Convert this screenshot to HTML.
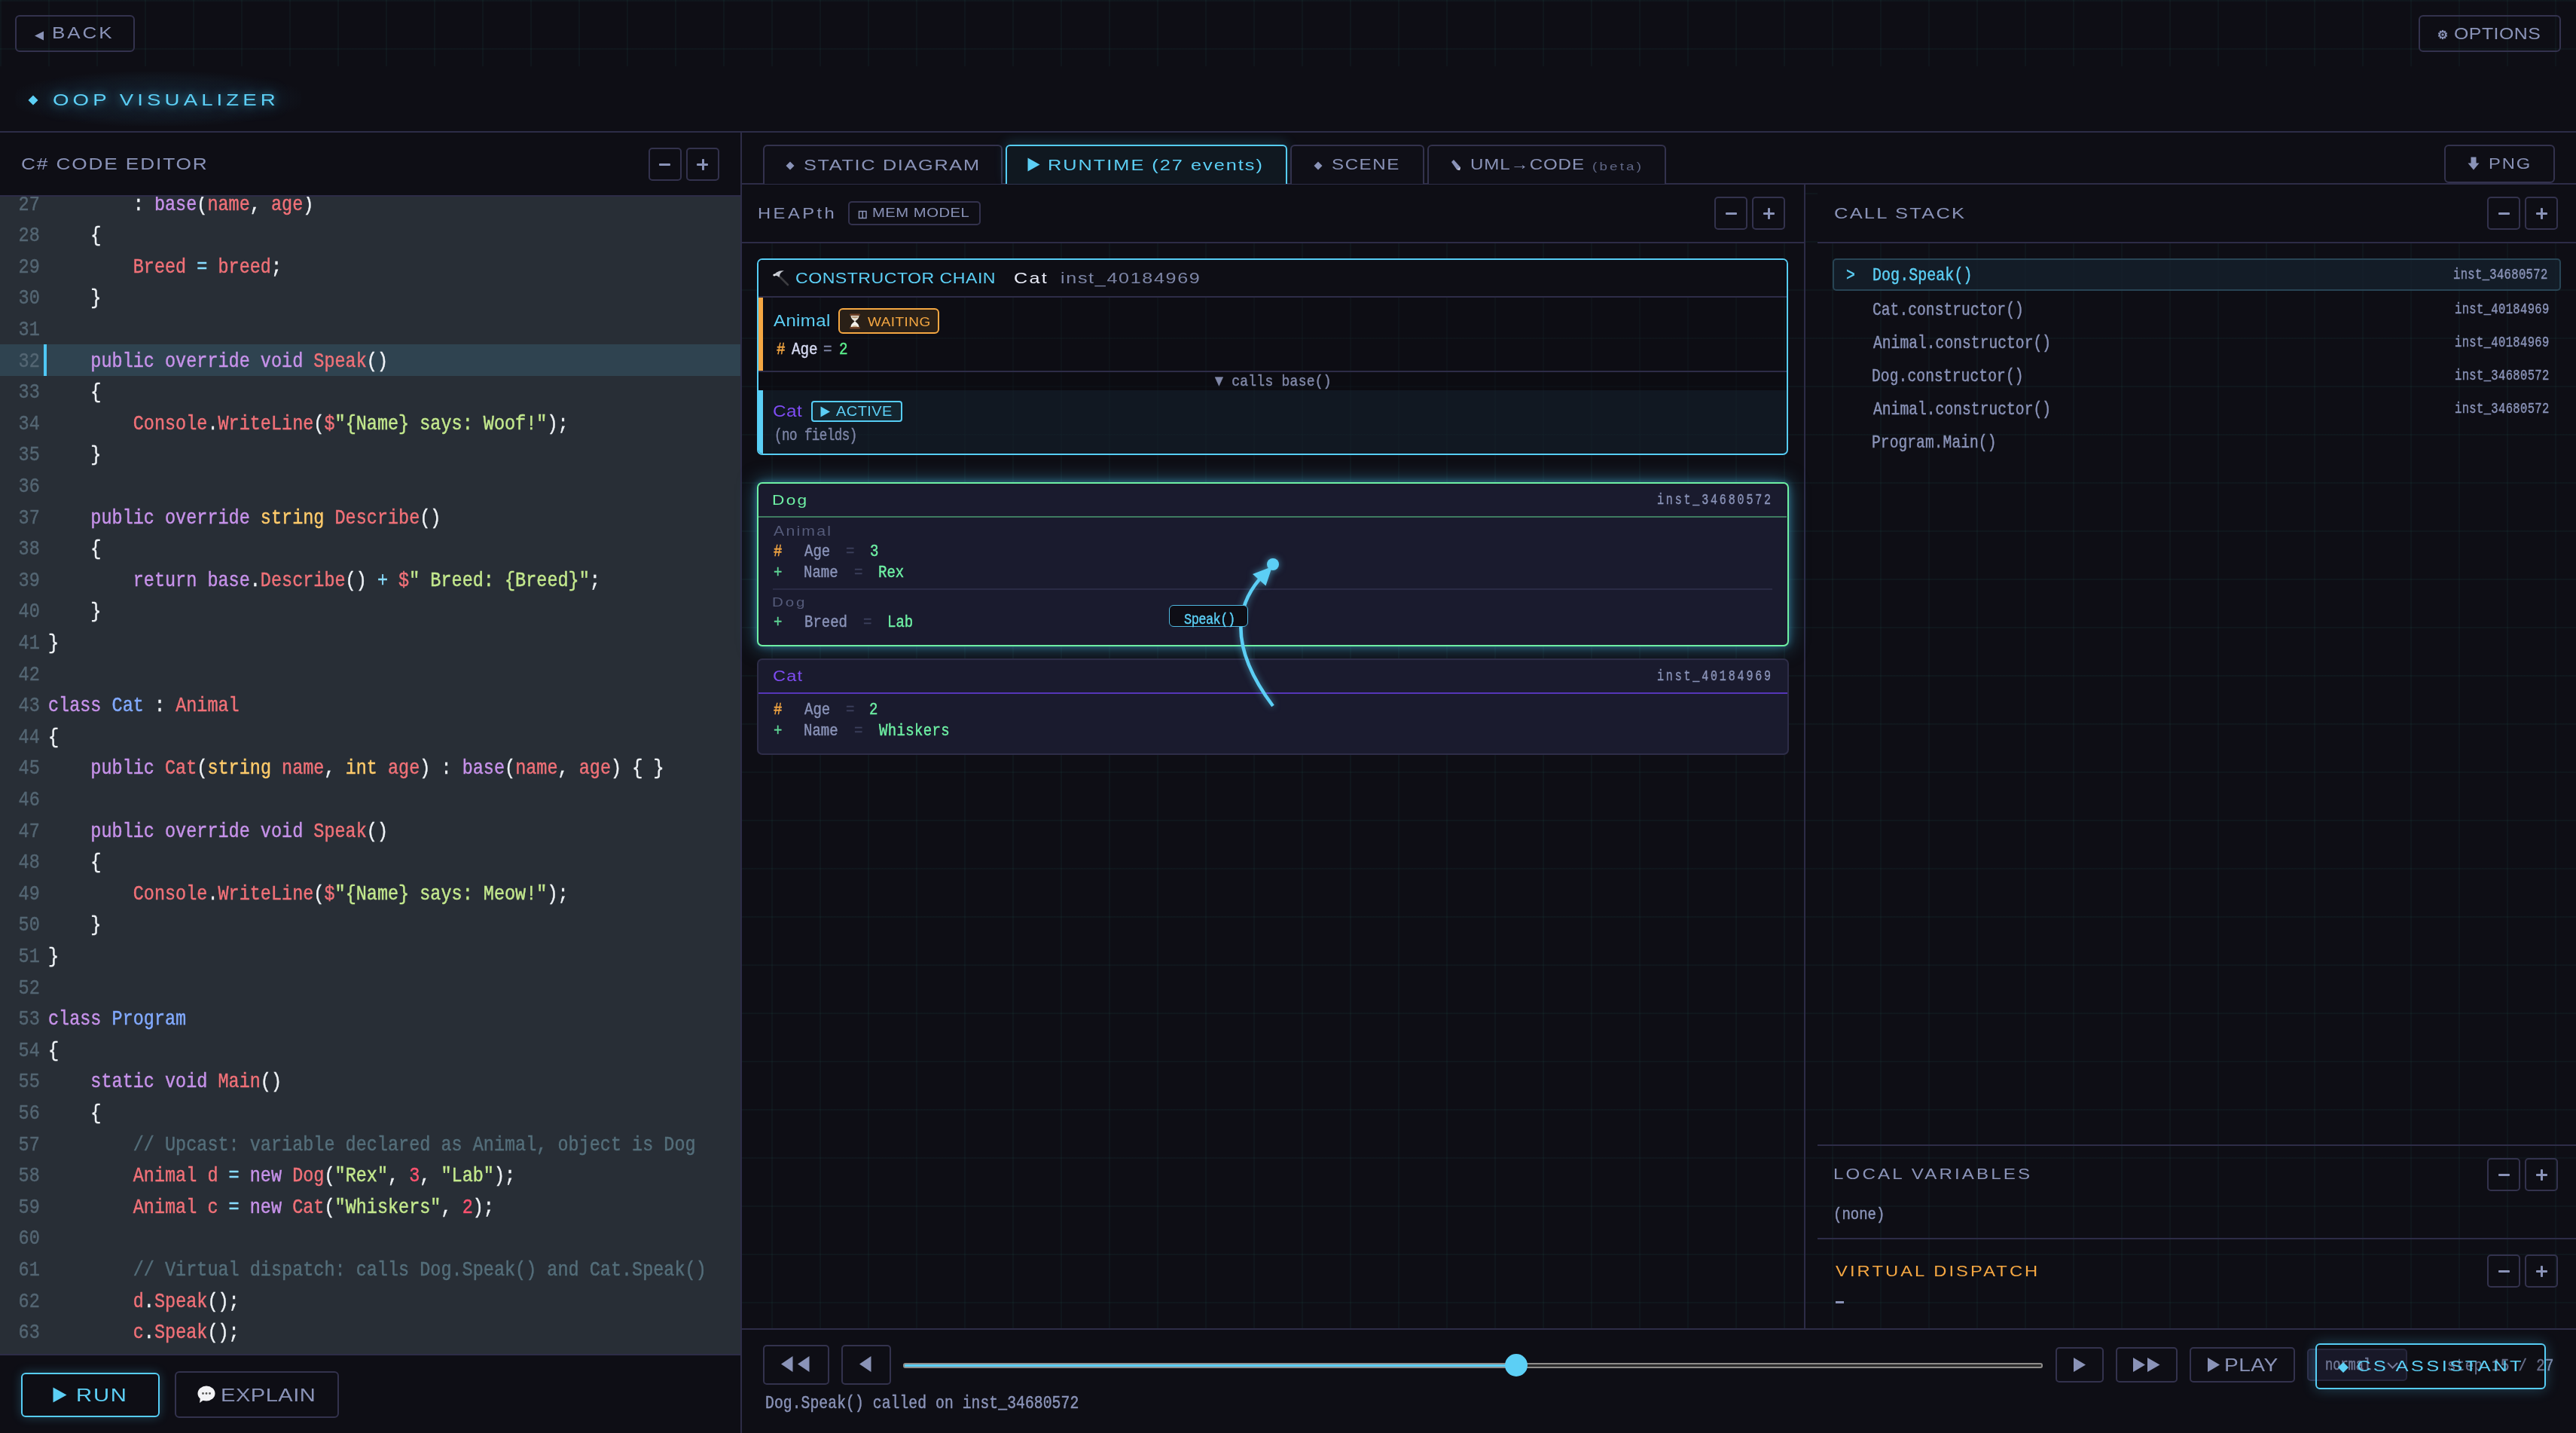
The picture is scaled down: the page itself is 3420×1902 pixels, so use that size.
<!DOCTYPE html>
<html><head><meta charset="utf-8">
<style>
html,body{margin:0;padding:0;}
body{width:3420px;height:1902px;position:relative;overflow:hidden;background-color:#0e0e15;
 background-image:linear-gradient(to right, rgba(50,165,150,.055) 2px, transparent 2px),linear-gradient(to bottom, rgba(50,165,150,.055) 2px, transparent 2px);
 background-size:64px 64px;font-family:"Liberation Sans",sans-serif;}
div{box-sizing:border-box;}
@media (max-width:1800px){html{zoom:0.5;}}
.a{position:absolute;}
.fs{position:absolute;font-family:"Liberation Sans",sans-serif;white-space:pre;}
.fm{position:absolute;font-family:"Liberation Mono",monospace;white-space:pre;-webkit-text-stroke:0.45px currentColor;}
.solid{position:absolute;background:#0e0e15;}
.hl{position:absolute;background:#2d2c47;}
.btn{position:absolute;border:2px solid #33324d;border-radius:6px;}
.cl{position:absolute;left:0;width:983px;height:41.6px;font-family:"Liberation Mono",monospace;font-size:27.3px;line-height:41.6px;white-space:pre;-webkit-text-stroke:0.45px currentColor;}
.ln{position:absolute;right:930px;color:#546673;transform:scaleX(0.8603);transform-origin:100% 0;}
.cx{position:absolute;left:64px;transform:scaleX(0.8603);transform-origin:0 0;}
.kW{color:#eef2f6}.kP{color:#c792ea}.kR{color:#f07178}.kY{color:#ffcb6b}.kB{color:#82aaff}.kC{color:#89ddff}.kS{color:#c3e88d}.kN{color:#ff5370}.kM{color:#546e7a}
.mm{position:absolute;width:15px;height:3px;background:#8a93b8;border-radius:1px;}
</style></head><body>

<!-- title header -->
<div class="solid" style="left:0;top:88px;width:3420px;height:88px;"></div>
<div class="hl" style="left:0;top:174px;width:3420px;height:2px;"></div>
<div class="a" style="left:20px;top:95px;width:380px;height:72px;border-radius:36px;background:radial-gradient(ellipse at center, rgba(70,170,220,.13) 0%, rgba(70,170,220,.05) 55%, transparent 75%);"></div>

<!-- top buttons -->
<div class="btn" style="left:20px;top:20px;width:159px;height:49px;"></div>
<svg class="a" style="left:45px;top:41px" width="14" height="13"><polygon points="1,6.5 13,0.5 13,12.5" fill="#8a93b8"/></svg>
<div class="btn" style="left:3211px;top:20px;width:189px;height:49px;"></div>
<svg class="a" style="left:3235px;top:38px" width="16" height="16" viewBox="0 0 16 16"><g fill="#8a93b8"><circle cx="8" cy="8" r="4.7"/><rect x="6.9" y="1.9" width="2.2" height="3" transform="rotate(0 8 8)"/><rect x="6.9" y="1.9" width="2.2" height="3" transform="rotate(36 8 8)"/><rect x="6.9" y="1.9" width="2.2" height="3" transform="rotate(72 8 8)"/><rect x="6.9" y="1.9" width="2.2" height="3" transform="rotate(108 8 8)"/><rect x="6.9" y="1.9" width="2.2" height="3" transform="rotate(144 8 8)"/><rect x="6.9" y="1.9" width="2.2" height="3" transform="rotate(180 8 8)"/><rect x="6.9" y="1.9" width="2.2" height="3" transform="rotate(216 8 8)"/><rect x="6.9" y="1.9" width="2.2" height="3" transform="rotate(252 8 8)"/><rect x="6.9" y="1.9" width="2.2" height="3" transform="rotate(288 8 8)"/><rect x="6.9" y="1.9" width="2.2" height="3" transform="rotate(324 8 8)"/></g><circle cx="8" cy="8" r="3" fill="#0e0e15"/><circle cx="8" cy="8" r="1.7" fill="#8a93b8"/></svg>
<svg class="a" style="left:37px;top:126px" width="14" height="14"><polygon points="7,0.5 13.5,7 7,13.5 0.5,7" fill="#5ccff5"/></svg>

<!-- left editor -->
<div class="solid" style="left:0;top:176px;width:983px;height:85px;"></div>
<div class="hl" style="left:0;top:259px;width:983px;height:2px;"></div>
<div class="btn" style="left:861px;top:196px;width:44px;height:44px;border-radius:5px;"></div>
<div class="btn" style="left:911px;top:196px;width:44px;height:44px;border-radius:5px;"></div>
<div class="mm" style="left:875px;top:216.5px;"></div>
<div class="mm" style="left:925px;top:216.5px;"></div>
<div class="mm" style="left:931.5px;top:210.5px;width:3px;height:15px;"></div>
<div class="a" style="left:0;top:261px;width:983px;height:1536px;background:#282e36;overflow:hidden;">
 <div class="a" style="left:0;top:196.2px;width:983px;height:41.6px;background:#2f4350;"></div>
 <div class="a" style="left:58px;top:196.2px;width:4px;height:41.6px;background:#4fc8f5;"></div>
<div class="cl" style="top:-10.5px"><span class="ln">27</span><span class="cx"><span class="kW">        : </span><span class="kP">base</span><span class="kW">(</span><span class="kR">name</span><span class="kW">, </span><span class="kR">age</span><span class="kW">)</span></span></div>
<div class="cl" style="top:31.1px"><span class="ln">28</span><span class="cx"><span class="kW">    {</span></span></div>
<div class="cl" style="top:72.7px"><span class="ln">29</span><span class="cx"><span class="kR">        Breed</span><span class="kC"> = </span><span class="kR">breed</span><span class="kW">;</span></span></div>
<div class="cl" style="top:114.3px"><span class="ln">30</span><span class="cx"><span class="kW">    }</span></span></div>
<div class="cl" style="top:155.9px"><span class="ln">31</span><span class="cx"></span></div>
<div class="cl" style="top:197.5px"><span class="ln">32</span><span class="cx"><span class="kP">    public override void </span><span class="kR">Speak</span><span class="kW">()</span></span></div>
<div class="cl" style="top:239.1px"><span class="ln">33</span><span class="cx"><span class="kW">    {</span></span></div>
<div class="cl" style="top:280.7px"><span class="ln">34</span><span class="cx"><span class="kR">        Console</span><span class="kW">.</span><span class="kR">WriteLine</span><span class="kW">(</span><span class="kR">$</span><span class="kS">&quot;{Name} says: Woof!&quot;</span><span class="kW">);</span></span></div>
<div class="cl" style="top:322.3px"><span class="ln">35</span><span class="cx"><span class="kW">    }</span></span></div>
<div class="cl" style="top:363.9px"><span class="ln">36</span><span class="cx"></span></div>
<div class="cl" style="top:405.5px"><span class="ln">37</span><span class="cx"><span class="kP">    public override </span><span class="kY">string </span><span class="kR">Describe</span><span class="kW">()</span></span></div>
<div class="cl" style="top:447.1px"><span class="ln">38</span><span class="cx"><span class="kW">    {</span></span></div>
<div class="cl" style="top:488.7px"><span class="ln">39</span><span class="cx"><span class="kP">        return base</span><span class="kW">.</span><span class="kR">Describe</span><span class="kW">() </span><span class="kC">+ </span><span class="kR">$</span><span class="kS">&quot; Breed: {Breed}&quot;</span><span class="kW">;</span></span></div>
<div class="cl" style="top:530.3px"><span class="ln">40</span><span class="cx"><span class="kW">    }</span></span></div>
<div class="cl" style="top:571.9px"><span class="ln">41</span><span class="cx"><span class="kW">}</span></span></div>
<div class="cl" style="top:613.5px"><span class="ln">42</span><span class="cx"></span></div>
<div class="cl" style="top:655.1px"><span class="ln">43</span><span class="cx"><span class="kP">class </span><span class="kB">Cat</span><span class="kW"> : </span><span class="kR">Animal</span></span></div>
<div class="cl" style="top:696.7px"><span class="ln">44</span><span class="cx"><span class="kW">{</span></span></div>
<div class="cl" style="top:738.3px"><span class="ln">45</span><span class="cx"><span class="kP">    public </span><span class="kR">Cat</span><span class="kW">(</span><span class="kY">string </span><span class="kR">name</span><span class="kW">, </span><span class="kY">int </span><span class="kR">age</span><span class="kW">) : </span><span class="kP">base</span><span class="kW">(</span><span class="kR">name</span><span class="kW">, </span><span class="kR">age</span><span class="kW">) { }</span></span></div>
<div class="cl" style="top:779.9px"><span class="ln">46</span><span class="cx"></span></div>
<div class="cl" style="top:821.5px"><span class="ln">47</span><span class="cx"><span class="kP">    public override void </span><span class="kR">Speak</span><span class="kW">()</span></span></div>
<div class="cl" style="top:863.1px"><span class="ln">48</span><span class="cx"><span class="kW">    {</span></span></div>
<div class="cl" style="top:904.7px"><span class="ln">49</span><span class="cx"><span class="kR">        Console</span><span class="kW">.</span><span class="kR">WriteLine</span><span class="kW">(</span><span class="kR">$</span><span class="kS">&quot;{Name} says: Meow!&quot;</span><span class="kW">);</span></span></div>
<div class="cl" style="top:946.3px"><span class="ln">50</span><span class="cx"><span class="kW">    }</span></span></div>
<div class="cl" style="top:987.9px"><span class="ln">51</span><span class="cx"><span class="kW">}</span></span></div>
<div class="cl" style="top:1029.5px"><span class="ln">52</span><span class="cx"></span></div>
<div class="cl" style="top:1071.1px"><span class="ln">53</span><span class="cx"><span class="kP">class </span><span class="kB">Program</span></span></div>
<div class="cl" style="top:1112.7px"><span class="ln">54</span><span class="cx"><span class="kW">{</span></span></div>
<div class="cl" style="top:1154.3px"><span class="ln">55</span><span class="cx"><span class="kP">    static void </span><span class="kR">Main</span><span class="kW">()</span></span></div>
<div class="cl" style="top:1195.9px"><span class="ln">56</span><span class="cx"><span class="kW">    {</span></span></div>
<div class="cl" style="top:1237.5px"><span class="ln">57</span><span class="cx"><span class="kM">        // Upcast: variable declared as Animal, object is Dog</span></span></div>
<div class="cl" style="top:1279.1px"><span class="ln">58</span><span class="cx"><span class="kR">        Animal d </span><span class="kC">= </span><span class="kP">new </span><span class="kR">Dog</span><span class="kW">(</span><span class="kS">&quot;Rex&quot;</span><span class="kW">, </span><span class="kN">3</span><span class="kW">, </span><span class="kS">&quot;Lab&quot;</span><span class="kW">);</span></span></div>
<div class="cl" style="top:1320.7px"><span class="ln">59</span><span class="cx"><span class="kR">        Animal c </span><span class="kC">= </span><span class="kP">new </span><span class="kR">Cat</span><span class="kW">(</span><span class="kS">&quot;Whiskers&quot;</span><span class="kW">, </span><span class="kN">2</span><span class="kW">);</span></span></div>
<div class="cl" style="top:1362.3px"><span class="ln">60</span><span class="cx"></span></div>
<div class="cl" style="top:1403.9px"><span class="ln">61</span><span class="cx"><span class="kM">        // Virtual dispatch: calls Dog.Speak() and Cat.Speak()</span></span></div>
<div class="cl" style="top:1445.5px"><span class="ln">62</span><span class="cx"><span class="kR">        d</span><span class="kW">.</span><span class="kR">Speak</span><span class="kW">();</span></span></div>
<div class="cl" style="top:1487.1px"><span class="ln">63</span><span class="cx"><span class="kR">        c</span><span class="kW">.</span><span class="kR">Speak</span><span class="kW">();</span></span></div>
<div class="cl" style="top:1528.7px"><span class="ln">64</span><span class="cx"><span class="kW">    }</span></span></div>
</div>
<div class="hl" style="left:0;top:1797px;width:983px;height:2px;"></div>
<div class="solid" style="left:0;top:1799px;width:983px;height:103px;"></div>
<div class="a" style="left:28px;top:1822px;width:184px;height:59px;border:2.5px solid #56cdf5;border-radius:6px;box-shadow:0 0 14px rgba(80,200,245,.28);"></div>
<svg class="a" style="left:70px;top:1841px" width="20" height="21"><polygon points="0.5,0.5 18.5,10.5 0.5,20.5" fill="#5ccff5"/></svg>
<div class="btn" style="left:232px;top:1820px;width:218px;height:62px;"></div>
<svg class="a" style="left:261px;top:1839px" width="26" height="24" viewBox="0 0 26 24"><ellipse cx="13" cy="10.5" rx="11.5" ry="10" fill="#f2f2f5"/><polygon points="5,16 4,23 11,18" fill="#f2f2f5"/><circle cx="8.5" cy="10.5" r="1.4" fill="#555"/><circle cx="13" cy="10.5" r="1.4" fill="#555"/><circle cx="17.5" cy="10.5" r="1.4" fill="#555"/></svg>
<div class="hl" style="left:983px;top:176px;width:2px;height:1726px;"></div>

<!-- tab bar -->
<div class="solid" style="left:985px;top:176px;width:2435px;height:69px;"></div>
<div class="hl" style="left:985px;top:243px;width:2435px;height:2px;"></div>
<div class="a" style="left:1013px;top:192px;width:318px;height:52px;border:2px solid #33324d;border-bottom:none;border-radius:6px 6px 0 0;background:#0f0f17;"></div>
<div class="a" style="left:1335px;top:192px;width:374px;height:52px;border:2px solid #56cdf5;border-bottom:none;border-radius:6px 6px 0 0;background:#101820;box-shadow:0 -4px 16px rgba(80,200,245,.18);"></div>
<div class="a" style="left:1713px;top:192px;width:178px;height:52px;border:2px solid #33324d;border-bottom:none;border-radius:6px 6px 0 0;background:#0f0f17;"></div>
<div class="a" style="left:1895px;top:192px;width:317px;height:52px;border:2px solid #33324d;border-bottom:none;border-radius:6px 6px 0 0;background:#0f0f17;"></div>
<svg class="a" style="left:1042px;top:213px" width="14" height="14"><polygon points="7,1.5 12.5,7 7,12.5 1.5,7" fill="#8a93b8"/></svg>
<svg class="a" style="left:1364px;top:209px" width="17" height="19"><polygon points="0.5,0.5 16.5,9.5 0.5,18.5" fill="#5ccff5"/></svg>
<svg class="a" style="left:1743px;top:213px" width="14" height="14"><polygon points="7,1.5 12.5,7 7,12.5 1.5,7" fill="#8a93b8"/></svg>
<svg class="a" style="left:1925px;top:211px" width="15" height="16" viewBox="0 0 15 16"><polygon points="2,4 5,1 14,11 13,15 9,14" fill="#8a93b8"/><polygon points="9,14 13,15 14,11" fill="#c8cbe0"/></svg>
<div class="btn" style="left:3245px;top:192px;width:147px;height:51px;"></div>
<svg class="a" style="left:3276px;top:208px" width="16" height="18"><rect x="4.5" y="0.5" width="7" height="9" fill="#8a93b8"/><polygon points="0.5,8.5 15.5,8.5 8,17.5" fill="#8a93b8"/></svg>

<!-- heap header -->
<div class="solid" style="left:985px;top:245px;width:1410px;height:76px;"></div>
<div class="hl" style="left:985px;top:321px;width:1410px;height:2px;"></div>
<div class="btn" style="left:1126px;top:267px;width:176px;height:32px;border-radius:5px;"></div>
<svg class="a" style="left:1139px;top:279px" width="13" height="12"><rect x="1.5" y="1.5" width="9.5" height="9" fill="none" stroke="#8a93b8" stroke-width="1.5"/><rect x="5.5" y="1.5" width="1.5" height="9" fill="#8a93b8"/></svg>
<div class="btn" style="left:2276px;top:261px;width:44px;height:44px;border-radius:5px;"></div>
<div class="btn" style="left:2326px;top:261px;width:44px;height:44px;border-radius:5px;"></div>
<div class="mm" style="left:2290.5px;top:281.5px;"></div>
<div class="mm" style="left:2340.5px;top:281.5px;"></div>
<div class="mm" style="left:2346.5px;top:275.5px;width:3px;height:15px;"></div>
<div class="hl" style="left:2395px;top:245px;width:2px;height:1519px;"></div>

<!-- call stack header -->
<div class="solid" style="left:2413px;top:245px;width:1007px;height:76px;"></div>
<div class="hl" style="left:2413px;top:321px;width:1007px;height:2px;"></div>
<div class="btn" style="left:3302px;top:261px;width:44px;height:44px;border-radius:5px;"></div>
<div class="btn" style="left:3352px;top:261px;width:44px;height:44px;border-radius:5px;"></div>
<div class="mm" style="left:3316.5px;top:281.5px;"></div>
<div class="mm" style="left:3366.5px;top:281.5px;"></div>
<div class="mm" style="left:3372.5px;top:275.5px;width:3px;height:15px;"></div>
<div class="a" style="left:2433px;top:343px;width:967px;height:43px;border:2px solid #284454;border-radius:5px;background:rgba(22,34,46,.75);"></div>

<!-- local vars / virtual dispatch -->
<div class="hl" style="left:2413px;top:1519px;width:1007px;height:2px;"></div>
<div class="btn" style="left:3302px;top:1537px;width:44px;height:44px;border-radius:5px;"></div>
<div class="btn" style="left:3352px;top:1537px;width:44px;height:44px;border-radius:5px;"></div>
<div class="mm" style="left:3316.5px;top:1557.5px;"></div>
<div class="mm" style="left:3366.5px;top:1557.5px;"></div>
<div class="mm" style="left:3372.5px;top:1551.5px;width:3px;height:15px;"></div>
<div class="hl" style="left:2413px;top:1643px;width:1007px;height:2px;"></div>
<div class="btn" style="left:3302px;top:1665px;width:44px;height:44px;border-radius:5px;"></div>
<div class="btn" style="left:3352px;top:1665px;width:44px;height:44px;border-radius:5px;"></div>
<div class="mm" style="left:3316.5px;top:1685.5px;"></div>
<div class="mm" style="left:3366.5px;top:1685.5px;"></div>
<div class="mm" style="left:3372.5px;top:1679.5px;width:3px;height:15px;"></div>
<div class="a" style="left:2437px;top:1727px;width:11px;height:3px;background:#8a93b8;"></div>

<!-- constructor chain box -->
<div class="a" style="left:1005px;top:343px;width:1369px;height:261px;border:2px solid #56cdf5;border-radius:7px;background:rgba(14,14,21,.3);overflow:hidden;">
 <div class="a" style="left:0;top:0;width:1365px;height:48px;background:#0e0e15;"></div>
 <div class="hl" style="left:0;top:48px;width:1365px;height:2px;"></div>
 <div class="a" style="left:0;top:50px;width:6px;height:97px;background:#f5a742;"></div>
 <div class="hl" style="left:0;top:147px;width:1365px;height:2px;"></div>
 <div class="a" style="left:0;top:149px;width:1365px;height:24px;background:rgba(10,10,16,.3);"></div>
 <div class="a" style="left:0;top:173px;width:1365px;height:92px;background:rgba(22,38,52,.45);"></div>
 <div class="a" style="left:0;top:173px;width:6px;height:92px;background:#5ccff5;"></div>
</div>
<svg class="a" style="left:1025px;top:358px" width="24" height="22" viewBox="0 0 24 22"><line x1="9" y1="8" x2="21" y2="20" stroke="#3c3c40" stroke-width="2.6" stroke-linecap="round"/><path d="M1.5,7.5 L6,3.5 Q11,0.5 16,1.5 Q12,2.5 10.5,6 L9.5,10 L6.5,8 Z" fill="#c4c7cf"/><circle cx="3" cy="7" r="1.6" fill="#e8e9ee"/></svg>
<div class="a" style="left:1113px;top:409px;width:134px;height:34px;border:2px solid #f5a742;border-radius:6px;background:#2a2017;"></div>
<svg class="a" style="left:1127px;top:416px" width="16" height="21" viewBox="0 0 16 21"><path d="M2.5,3 C2.5,7.5 6.8,9 7.4,10.5 L8.6,10.5 C9.2,9 13.5,7.5 13.5,3 Z" fill="#e9e4da"/><path d="M3.5,4 L12.5,4 C12.3,5.5 11,6 8,6.5 C5,6 3.7,5.5 3.5,4 Z" fill="#b89a78"/><path d="M7.4,10.5 C6.8,12 2.5,13.5 2.5,18 L13.5,18 C13.5,13.5 9.2,12 8.6,10.5 Z" fill="#f3f0ea"/><path d="M4,18 C5,15.5 11,15.5 12,18 Z" fill="#c9ad86"/><rect x="1" y="0.5" width="14" height="2.6" rx="1" fill="#6e4026"/><rect x="1" y="17.9" width="14" height="2.6" rx="1" fill="#6e4026"/></svg>
<div class="a" style="left:1077px;top:532px;width:121px;height:28px;border:2px solid #56cdf5;border-radius:4px;background:#14252f;"></div>
<svg class="a" style="left:1089px;top:539px" width="14" height="15"><polygon points="0.5,0.5 13,7.5 0.5,14.5" fill="#5ccff5"/></svg>

<!-- dog box -->
<div class="a" style="left:1005px;top:640px;width:1370px;height:218px;border:2.5px solid #6ef0a4;border-radius:7px;background:#1a1b2e;box-shadow:0 0 26px rgba(70,175,215,.55),0 0 10px rgba(70,175,215,.45);">
 <div class="a" style="left:0;top:42.5px;width:1365px;height:2px;background:#3f7b60;"></div>
 <div class="a" style="left:19px;top:138.5px;width:1327px;height:2px;background:#2a2b45;"></div>
</div>
<!-- cat box -->
<div class="a" style="left:1005px;top:874px;width:1370px;height:128px;border:2px solid #2e2d48;border-radius:7px;background:#1a1b2e;">
 <div class="a" style="left:0;top:43px;width:1366px;height:2px;background:#5536b8;"></div>
</div>

<!-- arrow -->
<svg class="a" style="left:0;top:0;filter:drop-shadow(0 0 5px rgba(92,207,245,.6))" width="3420" height="1902">
 <path d="M1690,937 Q1615,836.5 1672,769" fill="none" stroke="#5ccff5" stroke-width="4.5"/>
 <polygon points="1663,762 1680.5,777.5 1689,752" fill="#5ccff5"/>
 <circle cx="1690" cy="749" r="8" fill="#5ccff5"/>
</svg>
<div class="a" style="left:1552px;top:803px;width:105px;height:29px;border:1.5px solid #4fb8e0;border-radius:6px;background:#0e0e16;"></div>

<!-- bottom bar -->
<div class="solid" style="left:985px;top:1765px;width:2435px;height:137px;"></div>
<div class="hl" style="left:985px;top:1763px;width:2435px;height:2px;"></div>
<div class="btn" style="left:1013px;top:1785px;width:88px;height:53px;border-radius:5px;"></div>
<svg class="a" style="left:1036px;top:1799px" width="40" height="23"><polygon points="1,11.5 16.5,1 16.5,22" fill="#8a93b8"/><polygon points="23,11.5 38.5,1 38.5,22" fill="#8a93b8"/></svg>
<div class="btn" style="left:1117px;top:1785px;width:66px;height:53px;border-radius:5px;"></div>
<svg class="a" style="left:1140px;top:1799px" width="18" height="23"><polygon points="1,11.5 16.5,1 16.5,22" fill="#8a93b8"/></svg>
<div class="a" style="left:1199px;top:1809px;width:1513px;height:6.5px;border-radius:3px;background:#2b2b2b;border:2px solid #8e8c8a;"></div>
<div class="a" style="left:1201px;top:1811px;width:812px;height:2.5px;background:#5ccff5;"></div>
<div class="a" style="left:1998px;top:1796.7px;width:30px;height:30px;border-radius:50%;background:#5ccff5;"></div>
<div class="btn" style="left:2729px;top:1788px;width:64px;height:47px;border-radius:5px;"></div>
<svg class="a" style="left:2752px;top:1801px" width="18" height="21"><polygon points="1,1 17,10.5 1,20" fill="#8a93b8"/></svg>
<div class="btn" style="left:2809px;top:1788px;width:82px;height:47px;border-radius:5px;"></div>
<svg class="a" style="left:2831px;top:1801px" width="38" height="21"><polygon points="1,1 17,10.5 1,20" fill="#8a93b8"/><polygon points="20,1 36.5,10.5 20,20" fill="#8a93b8"/></svg>
<div class="btn" style="left:2907px;top:1788px;width:140px;height:47px;border-radius:5px;"></div>
<svg class="a" style="left:2930px;top:1801px" width="18" height="21"><polygon points="1,1 17,10.5 1,20" fill="#8a93b8"/></svg>
<div class="a" style="left:3063px;top:1790px;width:133px;height:43px;border:2px solid #2e2d48;border-radius:5px;background:#1b1b2d;"></div>
<svg class="a" style="left:3169px;top:1808px" width="15" height="9"><polyline points="1,1 7.5,7.5 14,1" fill="none" stroke="#8a93b8" stroke-width="2"/></svg>
<div class="fs" style="left:69.0px;top:33.9px;font-size:21.37px;line-height:21.37px;letter-spacing:2.34px;color:#8a93b8;font-weight:400;transform:scaleX(1.22);transform-origin:0 0;">BACK</div>
<div class="fs" style="left:3257.8px;top:33.8px;font-size:21.8px;line-height:21.8px;letter-spacing:0.40px;color:#8a93b8;font-weight:400;transform:scaleX(1.1423);transform-origin:0 0;">OPTIONS</div>
<div class="fs" style="left:69.5px;top:120.6px;font-size:22.67px;line-height:22.67px;letter-spacing:4.15px;color:#5ccff5;font-weight:400;transform:scaleX(1.22);transform-origin:0 0;text-shadow:0 0 10px rgba(80,200,250,.55),0 0 22px rgba(80,200,250,.35);">OOP VISUALIZER</div>
<div class="fs" style="left:27.5px;top:207.6px;font-size:21.51px;line-height:21.51px;letter-spacing:1.53px;color:#8a93b8;font-weight:400;transform:scaleX(1.22);transform-origin:0 0;">C# CODE EDITOR</div>
<div class="fs" style="left:1066.8px;top:208.6px;font-size:20.78px;line-height:20.78px;letter-spacing:1.35px;color:#8a93b8;font-weight:400;transform:scaleX(1.22);transform-origin:0 0;">STATIC DIAGRAM</div>
<div class="fs" style="left:1391.2px;top:208.6px;font-size:20.78px;line-height:20.78px;letter-spacing:1.63px;color:#5ccff5;font-weight:400;transform:scaleX(1.22);transform-origin:0 0;">RUNTIME (27 events)</div>
<div class="fs" style="left:1768.0px;top:209.4px;font-size:19.77px;line-height:19.77px;letter-spacing:1.28px;color:#8a93b8;font-weight:400;transform:scaleX(1.22);transform-origin:0 0;">SCENE</div>
<div class="fs" style="left:1951.5px;top:209.4px;font-size:19.77px;line-height:19.77px;letter-spacing:0.74px;color:#8a93b8;font-weight:400;transform:scaleX(1.22);transform-origin:0 0;">UML→CODE</div>
<div class="fs" style="left:2114.1px;top:213.1px;font-size:15.41px;line-height:15.41px;letter-spacing:2.60px;color:#5f6685;font-weight:400;transform:scaleX(1.22);transform-origin:0 0;">(beta)</div>
<div class="fs" style="left:3303.7px;top:207.7px;font-size:19.48px;line-height:19.48px;letter-spacing:1.57px;color:#8a93b8;font-weight:400;transform:scaleX(1.22);transform-origin:0 0;">PNG</div>
<div class="fs" style="left:1006.4px;top:273.6px;font-size:19.48px;line-height:19.48px;letter-spacing:2.83px;color:#8a93b8;font-weight:400;transform:scaleX(1.22);transform-origin:0 0;">HEAPth</div>
<div class="fs" style="left:1157.5px;top:274.5px;font-size:16.86px;line-height:16.86px;letter-spacing:0.40px;color:#8a93b8;font-weight:400;transform:scaleX(1.2015);transform-origin:0 0;">MEM MODEL</div>
<div class="fs" style="left:2435.4px;top:273.1px;font-size:20.93px;line-height:20.93px;letter-spacing:1.81px;color:#8a93b8;font-weight:400;transform:scaleX(1.22);transform-origin:0 0;">CALL STACK</div>
<div class="fs" style="left:1055.5px;top:359.1px;font-size:20.64px;line-height:20.64px;letter-spacing:0.40px;color:#5ccff5;font-weight:400;transform:scaleX(1.1234);transform-origin:0 0;">CONSTRUCTOR CHAIN</div>
<div class="fs" style="left:1345.5px;top:359.1px;font-size:20.64px;line-height:20.64px;letter-spacing:1.84px;color:#e8eaf6;font-weight:400;transform:scaleX(1.22);transform-origin:0 0;">Cat</div>
<div class="fs" style="left:1408.4px;top:359.1px;font-size:20.64px;line-height:20.64px;letter-spacing:1.35px;color:#7d85a6;font-weight:400;transform:scaleX(1.22);transform-origin:0 0;">inst_40184969</div>
<div class="fs" style="left:1026.5px;top:414.9px;font-size:22.53px;line-height:22.53px;letter-spacing:0.40px;color:#5ccff5;font-weight:400;transform:scaleX(1.0623);transform-origin:0 0;">Animal</div>
<div class="fs" style="left:1151.5px;top:418.5px;font-size:17.15px;line-height:17.15px;letter-spacing:0.40px;color:#f5a742;font-weight:400;transform:scaleX(1.1075);transform-origin:0 0;">WAITING</div>
<div class="fs" style="left:1026.2px;top:535.4px;font-size:21.95px;line-height:21.95px;letter-spacing:0.40px;color:#7e4cf2;font-weight:400;transform:scaleX(1.1095);transform-origin:0 0;">Cat</div>
<div class="fs" style="left:1110.0px;top:537.5px;font-size:17.88px;line-height:17.88px;letter-spacing:0.40px;color:#5ccff5;font-weight:400;transform:scaleX(1.1182);transform-origin:0 0;">ACTIVE</div>
<div class="fs" style="left:1025.4px;top:654.6px;font-size:18.6px;line-height:18.6px;letter-spacing:1.87px;color:#6ef0a4;font-weight:400;transform:scaleX(1.22);transform-origin:0 0;">Dog</div>
<div class="fs" style="left:1026.6px;top:697.4px;font-size:17.44px;line-height:17.44px;letter-spacing:1.80px;color:#555b7a;font-weight:400;transform:scaleX(1.22);transform-origin:0 0;">Animal</div>
<div class="fs" style="left:1025.4px;top:791.6px;font-size:16.86px;line-height:16.86px;letter-spacing:2.34px;color:#555b7a;font-weight:400;transform:scaleX(1.22);transform-origin:0 0;">Dog</div>
<div class="fs" style="left:1026.0px;top:887.6px;font-size:19.33px;line-height:19.33px;letter-spacing:0.99px;color:#7e4cf2;font-weight:400;transform:scaleX(1.22);transform-origin:0 0;">Cat</div>
<div class="fs" style="left:2434.1px;top:1549.1px;font-size:19.77px;line-height:19.77px;letter-spacing:2.58px;color:#8a93b8;font-weight:400;transform:scaleX(1.22);transform-origin:0 0;">LOCAL VARIABLES</div>
<div class="fs" style="left:2436.5px;top:1677.5px;font-size:19.48px;line-height:19.48px;letter-spacing:2.52px;color:#f5a742;font-weight:400;transform:scaleX(1.22);transform-origin:0 0;">VIRTUAL DISPATCH</div>
<div class="fs" style="left:101.4px;top:1840.0px;font-size:23.98px;line-height:23.98px;letter-spacing:1.49px;color:#5ccff5;font-weight:400;transform:scaleX(1.22);transform-origin:0 0;">RUN</div>
<div class="fs" style="left:293.0px;top:1840.0px;font-size:23.98px;line-height:23.98px;letter-spacing:0.40px;color:#8a93b8;font-weight:400;transform:scaleX(1.2141);transform-origin:0 0;">EXPLAIN</div>
<div class="fs" style="left:2952.6px;top:1800.1px;font-size:23.84px;line-height:23.84px;letter-spacing:0.40px;color:#8a93b8;font-weight:400;transform:scaleX(1.1804);transform-origin:0 0;">PLAY</div>
<div class="fs" style="left:3129.2px;top:1803.3px;font-size:20.93px;line-height:20.93px;letter-spacing:2.80px;color:#5ccff5;font-weight:400;transform:scaleX(1.22);transform-origin:0 0;z-index:6;">CS ASSISTANT</div>
<div class="fm" style="left:1030.6px;top:454.3px;font-size:21.4px;line-height:21.4px;letter-spacing:0.00px;color:#f5a742;font-weight:400;transform:scaleX(0.8972);transform-origin:0 0;">#</div>
<div class="fm" style="left:1050.6px;top:454.3px;font-size:21.4px;line-height:21.4px;letter-spacing:0.00px;color:#d4d8f0;font-weight:400;transform:scaleX(0.8972);transform-origin:0 0;">Age</div>
<div class="fm" style="left:1093.2px;top:454.3px;font-size:21.4px;line-height:21.4px;letter-spacing:0.00px;color:#8088a8;font-weight:400;transform:scaleX(0.8972);transform-origin:0 0;">=</div>
<div class="fm" style="left:1114.0px;top:454.3px;font-size:21.4px;line-height:21.4px;letter-spacing:0.00px;color:#5cf08c;font-weight:400;transform:scaleX(0.8972);transform-origin:0 0;">2</div>
<div class="fm" style="left:1028.1px;top:568.1px;font-size:21.5px;line-height:21.5px;letter-spacing:-0.65px;color:#7d85a6;font-weight:400;transform:scaleX(0.814);transform-origin:0 0;">(no fields)</div>
<div class="fm" style="left:1612.7px;top:496.8px;font-size:20.5px;line-height:20.5px;letter-spacing:0.30px;color:#8088a8;font-weight:400;transform:scaleX(0.878);transform-origin:0 0;">▼ calls base()</div>
<div class="fm" style="left:1026.5px;top:721.3px;font-size:22.8px;line-height:22.8px;letter-spacing:0.00px;color:#f5a742;font-weight:400;transform:scaleX(0.8333);transform-origin:0 0;">#</div>
<div class="fm" style="left:1067.7px;top:721.3px;font-size:22.8px;line-height:22.8px;letter-spacing:0.00px;color:#8a93b8;font-weight:400;transform:scaleX(0.8333);transform-origin:0 0;">Age</div>
<div class="fm" style="left:1122.5px;top:721.3px;font-size:22.8px;line-height:22.8px;letter-spacing:0.00px;color:#3c3f5c;font-weight:400;transform:scaleX(0.8333);transform-origin:0 0;">=</div>
<div class="fm" style="left:1154.6px;top:721.3px;font-size:22.8px;line-height:22.8px;letter-spacing:0.00px;color:#6ef0a4;font-weight:400;transform:scaleX(0.8333);transform-origin:0 0;">3</div>
<div class="fm" style="left:1026.5px;top:749.0px;font-size:22.8px;line-height:22.8px;letter-spacing:0.00px;color:#5fd494;font-weight:400;transform:scaleX(0.8333);transform-origin:0 0;">+</div>
<div class="fm" style="left:1067.4px;top:749.0px;font-size:22.8px;line-height:22.8px;letter-spacing:0.00px;color:#8a93b8;font-weight:400;transform:scaleX(0.8333);transform-origin:0 0;">Name</div>
<div class="fm" style="left:1133.5px;top:749.0px;font-size:22.8px;line-height:22.8px;letter-spacing:0.00px;color:#3c3f5c;font-weight:400;transform:scaleX(0.8333);transform-origin:0 0;">=</div>
<div class="fm" style="left:1166.0px;top:749.0px;font-size:22.8px;line-height:22.8px;letter-spacing:0.00px;color:#6ef0a4;font-weight:400;transform:scaleX(0.8333);transform-origin:0 0;">Rex</div>
<div class="fm" style="left:1026.5px;top:814.8px;font-size:22.8px;line-height:22.8px;letter-spacing:0.00px;color:#5fd494;font-weight:400;transform:scaleX(0.8333);transform-origin:0 0;">+</div>
<div class="fm" style="left:1067.6px;top:814.8px;font-size:22.8px;line-height:22.8px;letter-spacing:0.00px;color:#8a93b8;font-weight:400;transform:scaleX(0.8333);transform-origin:0 0;">Breed</div>
<div class="fm" style="left:1145.5px;top:814.8px;font-size:22.8px;line-height:22.8px;letter-spacing:0.00px;color:#3c3f5c;font-weight:400;transform:scaleX(0.8333);transform-origin:0 0;">=</div>
<div class="fm" style="left:1177.8px;top:814.8px;font-size:22.8px;line-height:22.8px;letter-spacing:0.00px;color:#6ef0a4;font-weight:400;transform:scaleX(0.8333);transform-origin:0 0;">Lab</div>
<div class="fm" style="left:1026.5px;top:930.6px;font-size:22.8px;line-height:22.8px;letter-spacing:0.00px;color:#f5a742;font-weight:400;transform:scaleX(0.8333);transform-origin:0 0;">#</div>
<div class="fm" style="left:1067.7px;top:930.6px;font-size:22.8px;line-height:22.8px;letter-spacing:0.00px;color:#8a93b8;font-weight:400;transform:scaleX(0.8333);transform-origin:0 0;">Age</div>
<div class="fm" style="left:1122.5px;top:930.6px;font-size:22.8px;line-height:22.8px;letter-spacing:0.00px;color:#3c3f5c;font-weight:400;transform:scaleX(0.8333);transform-origin:0 0;">=</div>
<div class="fm" style="left:1153.9px;top:930.6px;font-size:22.8px;line-height:22.8px;letter-spacing:0.00px;color:#6ef0a4;font-weight:400;transform:scaleX(0.8333);transform-origin:0 0;">2</div>
<div class="fm" style="left:1026.5px;top:958.9px;font-size:22.8px;line-height:22.8px;letter-spacing:0.00px;color:#5fd494;font-weight:400;transform:scaleX(0.8333);transform-origin:0 0;">+</div>
<div class="fm" style="left:1067.4px;top:958.9px;font-size:22.8px;line-height:22.8px;letter-spacing:0.00px;color:#8a93b8;font-weight:400;transform:scaleX(0.8333);transform-origin:0 0;">Name</div>
<div class="fm" style="left:1133.5px;top:958.9px;font-size:22.8px;line-height:22.8px;letter-spacing:0.00px;color:#3c3f5c;font-weight:400;transform:scaleX(0.8333);transform-origin:0 0;">=</div>
<div class="fm" style="left:1166.7px;top:958.9px;font-size:22.8px;line-height:22.8px;letter-spacing:0.43px;color:#6ef0a4;font-weight:400;transform:scaleX(0.8333);transform-origin:0 0;">Whiskers</div>
<div class="fm" style="left:2200.4px;top:654.1px;font-size:20.3px;line-height:20.3px;letter-spacing:3.85px;color:#8a93b8;font-weight:400;transform:scaleX(0.7389);transform-origin:0 0;">inst_34680572</div>
<div class="fm" style="left:2200.4px;top:888.1px;font-size:20.3px;line-height:20.3px;letter-spacing:3.85px;color:#8a93b8;font-weight:400;transform:scaleX(0.7389);transform-origin:0 0;">inst_40184969</div>
<div class="fm" style="left:1571.8px;top:813.0px;font-size:20.6px;line-height:20.6px;letter-spacing:-0.66px;color:#5ccff5;font-weight:400;transform:scaleX(0.8252);transform-origin:0 0;">Speak()</div>
<div class="fm" style="left:2450.5px;top:353.7px;font-size:23.8px;line-height:23.8px;letter-spacing:0.00px;color:#5ccff5;font-weight:400;transform:scaleX(0.8403);transform-origin:0 0;">&gt;</div>
<div class="fm" style="left:2485.6px;top:353.7px;font-size:23.8px;line-height:23.8px;letter-spacing:0.05px;color:#5ccff5;font-weight:400;transform:scaleX(0.8403);transform-origin:0 0;">Dog.Speak()</div>
<div class="fm" style="left:2485.7px;top:399.8px;font-size:23.5px;line-height:23.5px;letter-spacing:0.06px;color:#8a93b8;font-weight:400;transform:scaleX(0.834);transform-origin:0 0;">Cat.constructor()</div>
<div class="fm" style="left:3258.5px;top:402.4px;font-size:19.3px;line-height:19.3px;letter-spacing:0.47px;color:#8a93b8;font-weight:400;transform:scaleX(0.8031);transform-origin:0 0;">inst_40184969</div>
<div class="fm" style="left:2486.5px;top:443.7px;font-size:23.5px;line-height:23.5px;letter-spacing:0.05px;color:#8a93b8;font-weight:400;transform:scaleX(0.834);transform-origin:0 0;">Animal.constructor()</div>
<div class="fm" style="left:3258.5px;top:446.3px;font-size:19.3px;line-height:19.3px;letter-spacing:0.47px;color:#8a93b8;font-weight:400;transform:scaleX(0.8031);transform-origin:0 0;">inst_40184969</div>
<div class="fm" style="left:2484.8px;top:487.7px;font-size:23.5px;line-height:23.5px;letter-spacing:0.12px;color:#8a93b8;font-weight:400;transform:scaleX(0.834);transform-origin:0 0;">Dog.constructor()</div>
<div class="fm" style="left:3258.5px;top:490.3px;font-size:19.3px;line-height:19.3px;letter-spacing:0.47px;color:#8a93b8;font-weight:400;transform:scaleX(0.8031);transform-origin:0 0;">inst_34680572</div>
<div class="fm" style="left:2486.5px;top:531.7px;font-size:23.5px;line-height:23.5px;letter-spacing:0.05px;color:#8a93b8;font-weight:400;transform:scaleX(0.834);transform-origin:0 0;">Animal.constructor()</div>
<div class="fm" style="left:3258.5px;top:534.3px;font-size:19.3px;line-height:19.3px;letter-spacing:0.47px;color:#8a93b8;font-weight:400;transform:scaleX(0.8031);transform-origin:0 0;">inst_34680572</div>
<div class="fm" style="left:2484.8px;top:575.7px;font-size:23.5px;line-height:23.5px;letter-spacing:0.07px;color:#8a93b8;font-weight:400;transform:scaleX(0.834);transform-origin:0 0;">Program.Main()</div>
<div class="fm" style="left:3256.6px;top:356.2px;font-size:19.4px;line-height:19.4px;letter-spacing:0.45px;color:#8a93b8;font-weight:400;transform:scaleX(0.799);transform-origin:0 0;">inst_34680572</div>
<div class="fm" style="left:2434.4px;top:1602.1px;font-size:22.0px;line-height:22.0px;letter-spacing:0.00px;color:#8a93b8;font-weight:400;transform:scaleX(0.8636);transform-origin:0 0;">(none)</div>
<div class="fm" style="left:1015.5px;top:1851.0px;font-size:23.8px;line-height:23.8px;letter-spacing:0.09px;color:#8a93b8;font-weight:400;transform:scaleX(0.8277);transform-origin:0 0;">Dog.Speak() called on inst_34680572</div>
<div class="fm" style="left:3086.6px;top:1801.7px;font-size:21.2px;line-height:21.2px;letter-spacing:0.00px;color:#8a93b8;font-weight:400;transform:scaleX(0.8019);transform-origin:0 0;">normal</div>
<div class="fm" style="left:3249.3px;top:1801.5px;font-size:22.8px;line-height:22.8px;letter-spacing:0.50px;color:#7d85a6;font-weight:400;transform:scaleX(0.8333);transform-origin:0 0;">step 15 / 27</div>
<!-- cs assistant -->
<div class="a" style="left:3074px;top:1783px;width:306px;height:61px;border:2.5px solid #56cdf5;border-radius:6px;background:rgba(14,13,21,.2);box-shadow:0 0 18px rgba(80,200,245,.3);z-index:5;"></div>
<svg class="a" style="left:3103px;top:1807px;z-index:6" width="16" height="16"><polygon points="8,1 15,8 8,15 1,8" fill="#5ccff5"/></svg>
</body></html>
